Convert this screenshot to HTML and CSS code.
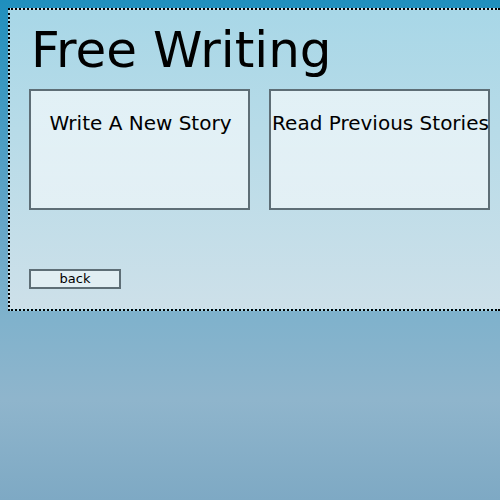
FILE: index.html
```html
<!DOCTYPE html>
<html>
<head>
<meta charset="utf-8">
<link rel="stylesheet" href="styles.css">
</head>
<body>
<div class="panel">
  <h1 class="title">Free Writing</h1>
  <div class="choices">
    <div class="choice"><span class="choice-label">Write A New Story</span></div>
    <div class="choice"><span class="choice-label">Read Previous Stories</span></div>
  </div>
  <button class="back">back</button>
</div>
</body>
</html>
```
FILE: styles.css
```css
html {
  overflow: hidden;
  height: 100%;
}
body {
  margin: 8px 0 8px 8px;
  height: calc(100% - 16px);
  font-family: "DejaVu Sans", sans-serif;
  color: #000;
  background: linear-gradient(180deg, #1f8fbd 0%, #5ea3c6 40%, #80b2cc 64%, #8fb5cc 80%, #7ea9c4 100%) fixed;
}
.panel {
  border: 2px dotted #000;
  border-right: none;
  padding: 12px 19px 20px 19px;
  background: linear-gradient(180deg, #a8d7e7 0%, #b7dbe8 40%, #cde0e9 100%);
  box-sizing: border-box;
}
.title {
  margin: 0 0 0 2px;
  font-size: 50px;
  font-weight: normal;
  line-height: 56px;
}
.choices {
  display: flex;
  gap: 19px;
  margin-top: 11px;
}
.choice {
  width: 221px;
  height: 121px;
  flex: none;
  box-sizing: border-box;
  border: 2px solid #5e6e76;
  background: linear-gradient(180deg, rgba(255,255,255,0.62), rgba(255,255,255,0.55));
  display: flex;
  justify-content: center;
  padding: 21px 0 0 2px;
}
.choice-label {
  font-size: 20px;
  line-height: 23px;
  white-space: nowrap;
}
.back {
  display: block;
  margin-top: 59px;
  width: 92px;
  height: 20px;
  box-sizing: border-box;
  border: 2px solid #5e6e76;
  background: #e1eef3;
  font-family: "DejaVu Sans", sans-serif;
  font-size: 13px;
  line-height: 14px;
  padding: 0;
  color: #000;
}
```
